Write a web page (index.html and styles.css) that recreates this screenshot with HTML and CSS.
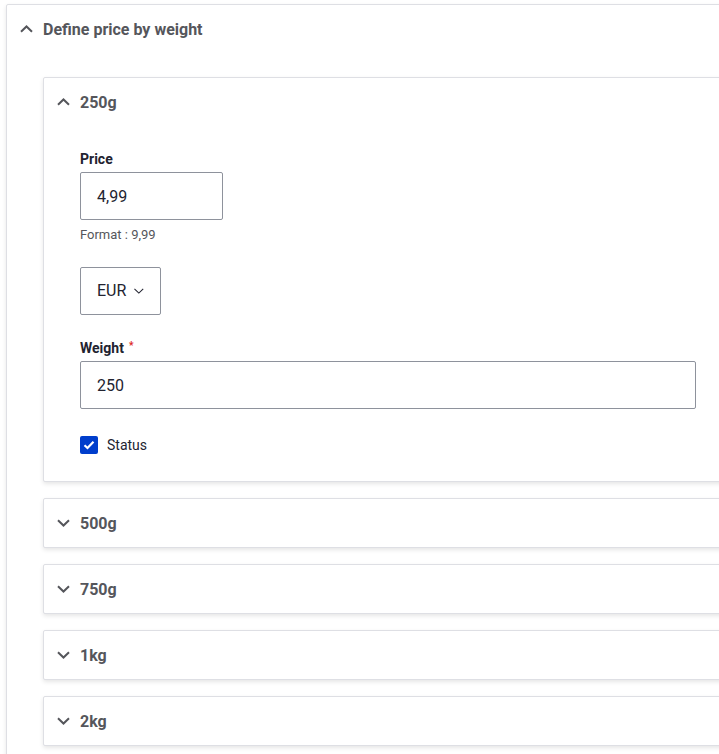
FILE: index.html
```html
<!DOCTYPE html>
<html lang="en">
<head>
    <meta charset="UTF-8">
    <meta name="viewport" content="width=device-width, initial-scale=1.0">
    <title>Define price by weight</title>
    <link rel="stylesheet" href="styles.css">
</head>
<body>
    <div class="page">
        <div class="details">
            <div class="summary">
                <svg class="chevron" width="13" height="8" viewBox="0 0 13 8"><path d="M1 6.8 6.5 1.5 12 6.8" fill="none" stroke="currentColor" stroke-width="2"/></svg>
                Define price by weight
            </div>
            <div class="details-body">
                <div class="details item">
                    <div class="summary">
                        <svg class="chevron" width="13" height="8" viewBox="0 0 13 8"><path d="M1 6.8 6.5 1.5 12 6.8" fill="none" stroke="currentColor" stroke-width="2"/></svg>
                        250g
                    </div>
                    <div class="item-body">
                        <div class="form-item">
                            <label class="label">Price</label>
                            <div class="input input-price">4,99</div>
                            <div class="description">Format : 9,99</div>
                        </div>
                        <div class="form-item">
                            <div class="select">
                                EUR
                                <svg width="11" height="6" viewBox="0 0 11 6"><path d="M.5.5 5.5 5.3 10.5.5" fill="none" stroke="currentColor" stroke-width="1.2"/></svg>
                            </div>
                        </div>
                        <div class="form-item">
                            <label class="label">Weight<span class="required">*</span></label>
                            <div class="input input-weight">250</div>
                        </div>
                        <div class="form-item checkbox-item">
                            <span class="checkbox">
                                <svg width="12" height="10" viewBox="0 0 12 10"><path d="M1.5 5.2 4.5 8 10.5 1.8" fill="none" stroke="#fff" stroke-width="2.2"/></svg>
                            </span>
                            <span class="checkbox-label">Status</span>
                        </div>
                    </div>
                </div>
                <div class="details item closed">
                    <div class="summary">
                        <svg class="chevron" width="13" height="8" viewBox="0 0 13 8"><path d="M1 1.2 6.5 6.5 12 1.2" fill="none" stroke="currentColor" stroke-width="2"/></svg>
                        500g
                    </div>
                </div>
                <div class="details item closed">
                    <div class="summary">
                        <svg class="chevron" width="13" height="8" viewBox="0 0 13 8"><path d="M1 1.2 6.5 6.5 12 1.2" fill="none" stroke="currentColor" stroke-width="2"/></svg>
                        750g
                    </div>
                </div>
                <div class="details item closed">
                    <div class="summary">
                        <svg class="chevron" width="13" height="8" viewBox="0 0 13 8"><path d="M1 1.2 6.5 6.5 12 1.2" fill="none" stroke="currentColor" stroke-width="2"/></svg>
                        1kg
                    </div>
                </div>
                <div class="details item closed">
                    <div class="summary">
                        <svg class="chevron" width="13" height="8" viewBox="0 0 13 8"><path d="M1 1.2 6.5 6.5 12 1.2" fill="none" stroke="currentColor" stroke-width="2"/></svg>
                        2kg
                    </div>
                </div>
            </div>
        </div>
    </div>
</body>
</html>
```

FILE: styles.css
```css
body {
    margin: 0;
    background: #fff;
    font-family: Roboto, "Liberation Sans", sans-serif;
    color: #222330;
    overflow: hidden;
}

.page {
    padding: 4px 0 0 6px;
    width: 780px;
}

.details {
    background: #fff;
    border: 1px solid #dedfe4;
    border-radius: 2px;
    box-shadow: 0 2px 4px rgba(0, 0, 0, 0.1);
}

.summary {
    display: flex;
    align-items: center;
    padding: 13px 16px 11px 36px;
    line-height: 24px;
    font-size: 16px;
    font-weight: bold;
    color: #55565b;
    position: relative;
}

.chevron {
    position: absolute;
    left: 13px;
    top: 20px;
    color: #55565b;
}

.details-body {
    padding: 24px 0 24px 36px;
    display: flex;
    flex-direction: column;
    gap: 16px;
}

.item-body {
    padding: 0 16px 24px 36px;
}

.form-item {
    margin-top: 24px;
}

.label {
    display: block;
    font-size: 14px;
    font-weight: bold;
    line-height: 18px;
    margin-bottom: 4px;
}

.required {
    color: #dc2323;
    font-size: 10px;
    vertical-align: top;
    margin-left: 5px;
    line-height: 14px;
}

.input, .select {
    box-sizing: border-box;
    height: 48px;
    border: 1px solid #8e929c;
    border-radius: 2px;
    padding: 0 16px;
    font-size: 16px;
    line-height: 48px;
    color: #222330;
}

.input-price {
    width: 143px;
}

.input-weight {
    width: 616px;
}

.description {
    margin-top: 6px;
    font-size: 13px;
    line-height: 17px;
    color: #55565b;
}

.select {
    width: 81px;
    display: flex;
    align-items: center;
    gap: 8px;
}

.checkbox-item {
    display: flex;
    align-items: center;
    gap: 9px;
    line-height: 24px;
}

.checkbox {
    width: 18px;
    height: 18px;
    border-radius: 2px;
    background: #003ecc;
    display: flex;
    align-items: center;
    justify-content: center;
}

.checkbox-label {
    font-size: 14px;
}
```
